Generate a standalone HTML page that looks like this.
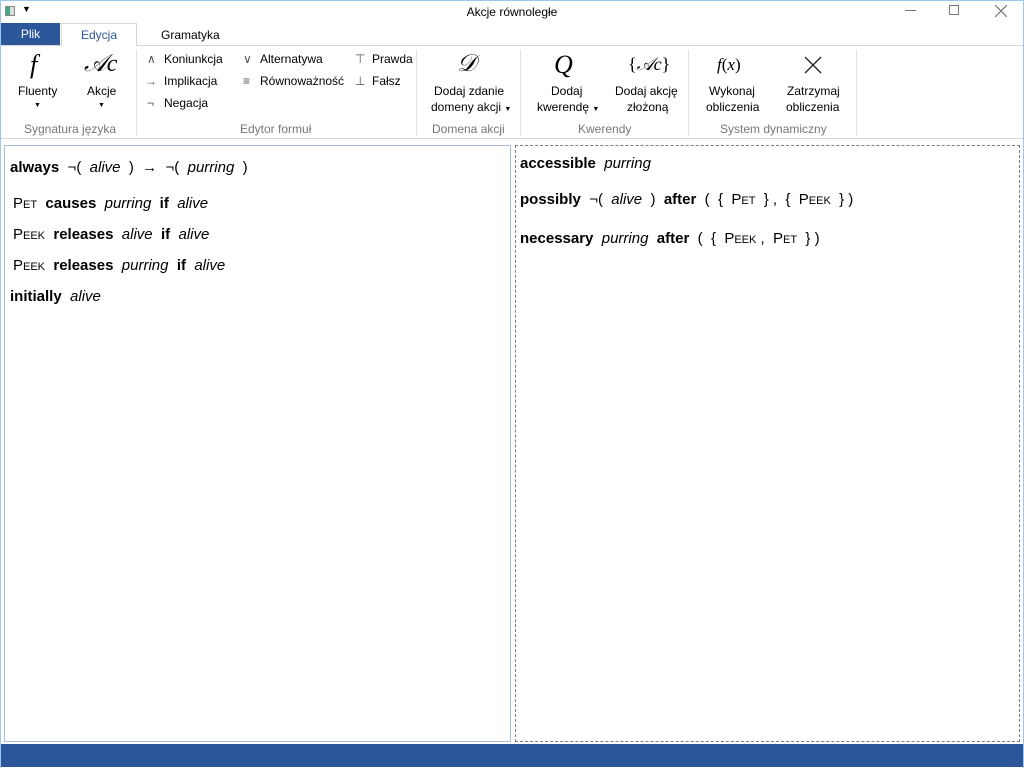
<!DOCTYPE html><html><head><style>
*{margin:0;padding:0;box-sizing:border-box}
body{width:1024px;height:768px;position:relative;background:#fff;font-family:"Liberation Sans","DejaVu Sans",sans-serif;overflow:hidden;color:#000}
.a{position:absolute;white-space:nowrap}
.s{font-size:12px}
.g{color:#777;font-size:12px}
.m{font-family:"Liberation Serif",serif;font-style:italic}
.vl{position:absolute;width:1px;background:#e0e0e0;top:50px;height:86px}
.t{font-size:15px;position:absolute;white-space:nowrap;left:10px}
.t b{font-weight:bold}.t i{font-style:italic}
.sc{font-variant:small-caps}
</style></head><body>
<div class="a" style="left:0;top:0;width:1024px;height:768px;border:1px solid #9cc8f0;border-bottom:none"></div>
<div class="a" style="left:5px;top:6px;width:10px;height:10px;border:1px solid #888;background:linear-gradient(90deg,#4a8 0,#4a8 50%,#ddd 50%)"></div>
<div class="a" style="left:22px;top:4px;font-size:9px">&#9660;</div>
<div class="a s" style="left:0;width:1024px;text-align:center;top:5px">Akcje równoległe</div>
<div class="a" style="left:905px;top:10px;width:11px;height:1px;background:#777"></div>
<div class="a" style="left:949px;top:5px;width:10px;height:10px;border:1px solid #777"></div>
<svg class="a" style="left:995px;top:5px" width="12" height="12"><path d="M0 0L12 12M12 0L0 12" stroke="#777" stroke-width="1.2"/></svg>
<div class="a s" style="left:1px;top:23px;width:59px;height:22px;background:#2b579a;color:#fff;text-align:center;line-height:22px">Plik</div>
<div class="a s" style="left:61px;top:23px;width:76px;height:23px;border:1px solid #d5d5d5;border-bottom:none;background:#fff;color:#2b579a;text-align:center;line-height:22px;z-index:2">Edycja</div>
<div class="a s" style="left:161px;top:28px">Gramatyka</div>
<div class="a" style="left:1px;top:45px;width:1022px;height:1px;background:#d5d5d5"></div>
<div class="a" style="left:1px;top:138px;width:1022px;height:1px;background:#d5d5d5"></div>
<div class="a m" style="left:30px;top:50px;font-size:26px">f</div>
<div class="a s" style="left:18px;top:84px">Fluenty</div>
<div class="a" style="left:34px;top:102px;font-size:7px">&#9660;</div>
<div class="a m" style="left:84px;top:51px;font-size:24px;font-style:italic">𝒜c</div>
<div class="a s" style="left:87px;top:84px">Akcje</div>
<div class="a" style="left:98px;top:102px;font-size:7px">&#9660;</div>
<div class="a g" style="left:24px;top:122px">Sygnatura języka</div>
<div class="vl" style="left:136px"></div>
<div class="a s" style="left:147px;top:52px;color:#555">&#8743;</div><div class="a s" style="left:164px;top:52px">Koniunkcja</div>
<div class="a s" style="left:145px;top:74px;color:#555">&#8594;</div><div class="a s" style="left:164px;top:74px">Implikacja</div>
<div class="a s" style="left:147px;top:96px;color:#555">&#172;</div><div class="a s" style="left:164px;top:96px">Negacja</div>
<div class="a s" style="left:243px;top:52px;color:#555">&#8744;</div><div class="a s" style="left:260px;top:52px">Alternatywa</div>
<div class="a s" style="left:243px;top:74px;color:#555">&#8801;</div><div class="a s" style="left:260px;top:74px">Równoważność</div>
<div class="a s" style="left:355px;top:52px;color:#555">&#8868;</div><div class="a s" style="left:372px;top:52px">Prawda</div>
<div class="a s" style="left:355px;top:74px;color:#555">&#8869;</div><div class="a s" style="left:372px;top:74px">Fałsz</div>
<div class="a g" style="left:240px;top:122px">Edytor formuł</div>
<div class="vl" style="left:416px"></div>
<div class="a m" style="left:457px;top:51px;font-size:24px">𝒟</div>
<div class="a s" style="left:434px;top:84px">Dodaj zdanie</div>
<div class="a s" style="left:431px;top:100px">domeny akcji <span style="font-size:7px">&#9660;</span></div>
<div class="a g" style="left:432px;top:122px">Domena akcji</div>
<div class="vl" style="left:520px"></div>
<div class="a m" style="left:554px;top:50px;font-size:26px">Q</div>
<div class="a s" style="left:551px;top:84px">Dodaj</div>
<div class="a s" style="left:537px;top:100px">kwerendę <span style="font-size:7px">&#9660;</span></div>
<div class="a m" style="left:628px;top:54px;font-size:18px;font-style:normal">{<i>𝒜c</i>}</div>
<div class="a s" style="left:615px;top:84px">Dodaj akcję</div>
<div class="a s" style="left:627px;top:100px">złożoną</div>
<div class="a g" style="left:578px;top:122px">Kwerendy</div>
<div class="vl" style="left:688px"></div>
<div class="a m" style="left:717px;top:55px;font-size:17px"><i>f</i><span style="font-style:normal">(</span><i>x</i><span style="font-style:normal">)</span></div>
<div class="a s" style="left:709px;top:84px">Wykonaj</div>
<div class="a s" style="left:706px;top:100px">obliczenia</div>
<svg class="a" style="left:804px;top:56px" width="18" height="18"><path d="M1 1L17 17M17 1L1 17" stroke="#222" stroke-width="1.3"/></svg>
<div class="a s" style="left:787px;top:84px">Zatrzymaj</div>
<div class="a s" style="left:786px;top:100px">obliczenia</div>
<div class="a g" style="left:720px;top:122px">System dynamiczny</div>
<div class="vl" style="left:856px"></div>
<div class="a" style="left:4px;top:145px;width:507px;height:597px;border:1px solid #a9bcd9"></div>
<div class="a" style="left:515px;top:145px;width:505px;height:597px;border:1px dashed #7a7a8a"></div>
<div class="t" style="top:159px"><b>always</b>&nbsp; ¬( &nbsp;<i>alive</i>&nbsp; ) &nbsp;→&nbsp; ¬( &nbsp;<i>purring</i>&nbsp; )</div>
<div class="t" style="top:195px;left:13px"><span class="sc">Pet</span>&nbsp; <b>causes</b> &nbsp;<i>purring</i>&nbsp; <b>if</b>&nbsp; <i>alive</i></div>
<div class="t" style="top:226px;left:13px"><span class="sc">Peek</span>&nbsp; <b>releases</b>&nbsp; <i>alive</i>&nbsp; <b>if</b>&nbsp; <i>alive</i></div>
<div class="t" style="top:257px;left:13px"><span class="sc">Peek</span>&nbsp; <b>releases</b>&nbsp; <i>purring</i>&nbsp; <b>if</b>&nbsp; <i>alive</i></div>
<div class="t" style="top:288px"><b>initially</b>&nbsp; <i>alive</i></div>
<div class="t" style="top:155px;left:520px"><b>accessible</b>&nbsp; <i>purring</i></div>
<div class="t" style="top:191px;left:520px"><b>possibly</b>&nbsp; ¬( &nbsp;<i>alive</i>&nbsp; ) &nbsp;<b>after</b>&nbsp; ( &nbsp;{ &nbsp;<span class="sc">Pet</span>&nbsp; } , &nbsp;{ &nbsp;<span class="sc">Peek</span>&nbsp; } )</div>
<div class="t" style="top:230px;left:520px"><b>necessary</b>&nbsp; <i>purring</i>&nbsp; <b>after</b>&nbsp; ( &nbsp;{ &nbsp;<span class="sc">Peek</span> , &nbsp;<span class="sc">Pet</span>&nbsp; } )</div>
<div class="a" style="left:1px;top:744px;width:1022px;height:23px;background:#2b579a"></div>
</body></html>
